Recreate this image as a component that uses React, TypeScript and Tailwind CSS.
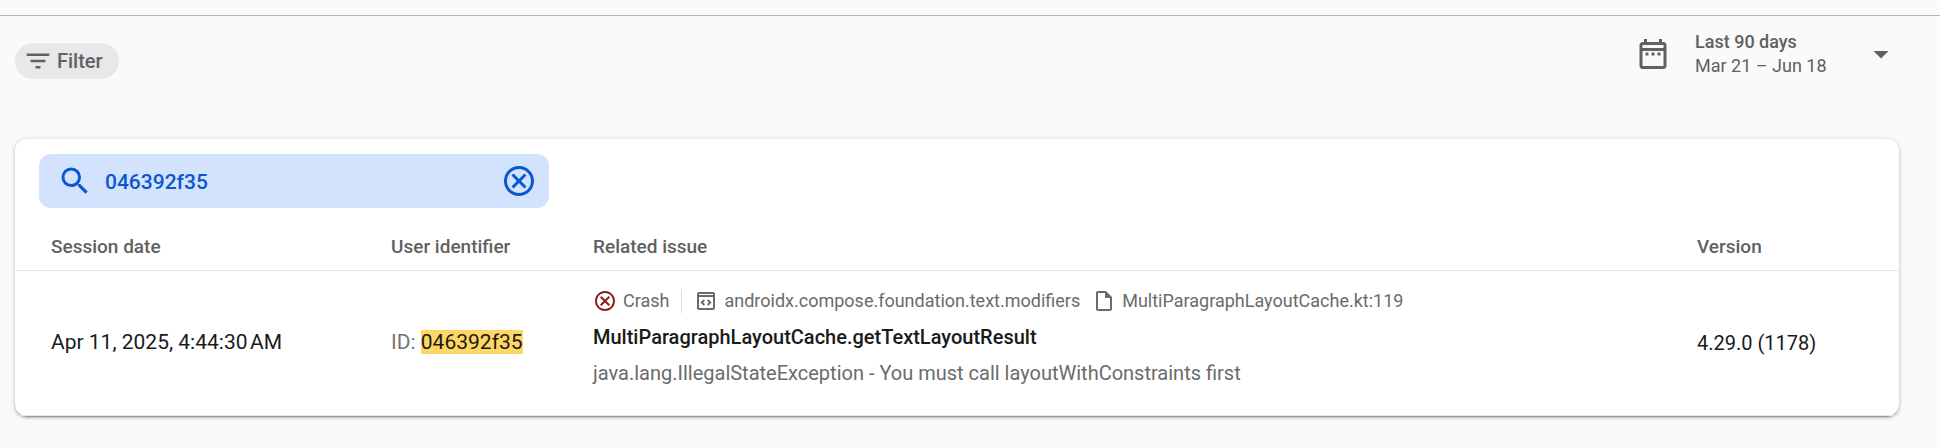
import React, { useState } from 'react';

type IconProps = { path: string; className?: string };

const Icon: React.FC<IconProps> = ({ path, className = 'size-6' }) => (
  <svg viewBox="0 0 24 24" fill="currentColor" aria-hidden="true" className={`shrink-0 ${className}`}>
    <path d={path} />
  </svg>
);

const icons = {
  filter: 'M10 18h4v-2h-4v2zM3 6v2h18V6H3zm3 7h12v-2H6v2z',
  calendar: 'M7 11h2v2H7v-2zm14-5v14c0 1.1-.9 2-2 2H5c-1.11 0-2-.9-2-2l.01-14c0-1.1.88-2 1.99-2h1V2h2v2h8V2h2v2h1c1.1 0 2 .9 2 2zM5 8h14V6H5v2zm14 12V10H5v10h14zm-4-7h2v-2h-2v2zm-4 0h2v-2h-2v2z',
  caret: 'M7 10l5 5 5-5z',
  search: 'M15.5 14h-.79l-.28-.27A6.471 6.471 0 0 0 16 9.5 6.5 6.5 0 1 0 9.5 16c1.61 0 3.09-.59 4.23-1.57l.27.28v.79l5 4.99L20.49 19l-4.99-5zm-6 0C7.01 14 5 11.99 5 9.5S7.01 5 9.5 5 14 7.01 14 9.5 11.99 14 9.5 14z',
  cancel: 'M12 2C6.47 2 2 6.47 2 12s4.47 10 10 10 10-4.47 10-10S17.53 2 12 2zm0 18c-4.41 0-8-3.59-8-8s3.59-8 8-8 8 3.59 8 8-3.59 8-8 8zm3.59-13L12 10.59 8.41 7 7 8.41 10.59 12 7 15.59 8.41 17 12 13.41 15.59 17 17 15.59 13.41 12 17 8.41z',
  pkg: 'M19 3H5c-1.1 0-2 .9-2 2v14c0 1.1.9 2 2 2h14c1.1 0 2-.9 2-2V5c0-1.1-.9-2-2-2zM5 5h14v1H5V5zm0 14V8h14v11H5zM9.6 10.3L6.4 13.5l3.2 3.2 1.4-1.4-1.8-1.8 1.8-1.8zM14.4 10.3L13 11.7l1.8 1.8-1.8 1.8 1.4 1.4 3.2-3.2z',
  file: 'M14 2H6c-1.1 0-2 .9-2 2v16c0 1.1.9 2 2 2h12c1.1 0 2-.9 2-2V8l-6-6zM6 20V4h7v5h5v11H6z',
};

const sessions = [
  {
    date: 'Apr 11, 2025, 4:44:30\u202fAM',
    userId: '046392f35',
    type: 'Crash',
    packageName: 'androidx.compose.foundation.text.modifiers',
    file: 'MultiParagraphLayoutCache.kt:119',
    title: 'MultiParagraphLayoutCache.getTextLayoutResult',
    message: 'java.lang.IllegalStateException - You must call layoutWithConstraints first',
    version: '4.29.0 (1178)',
  },
];

const App: React.FC = () => {
  const [query, setQuery] = useState('046392f35');

  return (
    <div className="min-h-screen bg-[#fafafa] pt-[15px] font-[Roboto,sans-serif] text-[21px] text-[#1a1a1a]">
      <div className="border-t border-[#b0b7c3]" />

      <header className="flex items-start justify-between pt-[14px] pr-[41px] pl-[15px]">
        <button className="mt-[13px] flex h-9 items-center gap-1 rounded-full bg-[#e6e8e9] pr-4 pl-2 text-[20px] font-medium text-[#616161]">
          <Icon path={icons.filter} className="size-[30px]" />
          Filter
        </button>
        <button className="flex items-center text-left text-[18px] leading-6 text-[#616161]">
          <Icon path={icons.calendar} className="size-9" />
          <span className="ml-6 w-[168px]">
            <span className="block font-medium">Last 90 days</span>
            <span className="block">Mar 21 – Jun 18</span>
          </span>
          <Icon path={icons.caret} className="size-9" />
        </button>
      </header>

      <main className="mt-[60px] mr-[41px] ml-[15px] rounded-xl bg-white shadow-[0_3px_1px_-2px_rgba(0,0,0,0.2),0_2px_2px_rgba(0,0,0,0.14),0_1px_5px_rgba(0,0,0,0.2)]">
        <div className="px-6 pt-[15px]">
          <div className="flex h-[54px] max-w-[510px] items-center gap-3 rounded-xl bg-[#d3e3fd] pr-3 pl-[18px] text-[#0b57d0]">
            <Icon path={icons.search} className="size-9" />
            <input
              aria-label="Search sessions"
              value={query}
              onChange={(e) => setQuery(e.target.value)}
              className="h-full min-w-0 flex-1 bg-transparent pt-0.5 font-medium outline-none"
            />
            <button aria-label="Clear search" onClick={() => setQuery('')}>
              <Icon path={icons.cancel} className="size-9" />
            </button>
          </div>
        </div>

        <table className="w-full table-fixed text-left">
          <thead>
            <tr className="h-[62px] border-b border-[#e3e6ea] text-[19px] text-[#616161]">
              <th className="w-[376px] pt-4 pl-9 font-medium">Session date</th>
              <th className="w-[202px] pt-4 font-medium">User identifier</th>
              <th className="pt-4 font-medium">Related issue</th>
              <th className="w-[202px] pt-4 font-medium">Version</th>
            </tr>
          </thead>
          <tbody>
            {sessions.map((s) => (
              <tr key={s.date} className="h-36 border-b border-[#e3e6ea]">
                <td className="pl-9">{s.date}</td>
                <td>
                  <span className="text-[#757575]">ID:</span>{' '}
                  <mark className="bg-[#fdd663] text-[#1a1a1a]">{s.userId}</mark>
                </td>
                <td className="pt-3 pb-6 text-[20px] leading-9">
                  <div className="flex h-9 items-center text-[18px] text-[#6b6b6b]">
                    <Icon path={icons.cancel} className="size-6 text-[#8c1d18]" />
                    <span className="ml-1.5">{s.type}</span>
                    <span className="mx-3 h-6 w-px bg-[#dadce0]" />
                    <Icon path={icons.pkg} />
                    <span className="ml-1.5">{s.packageName}</span>
                    <Icon path={icons.file} className="ml-3 size-6" />
                    <span className="ml-1.5">{s.file}</span>
                  </div>
                  <div className="font-medium">{s.title}</div>
                  <div className="text-[#6b6b6b]">{s.message}</div>
                </td>
                <td className="text-[20px]">{s.version}</td>
              </tr>
            ))}
          </tbody>
        </table>
      </main>
    </div>
  );
};

export default App;
